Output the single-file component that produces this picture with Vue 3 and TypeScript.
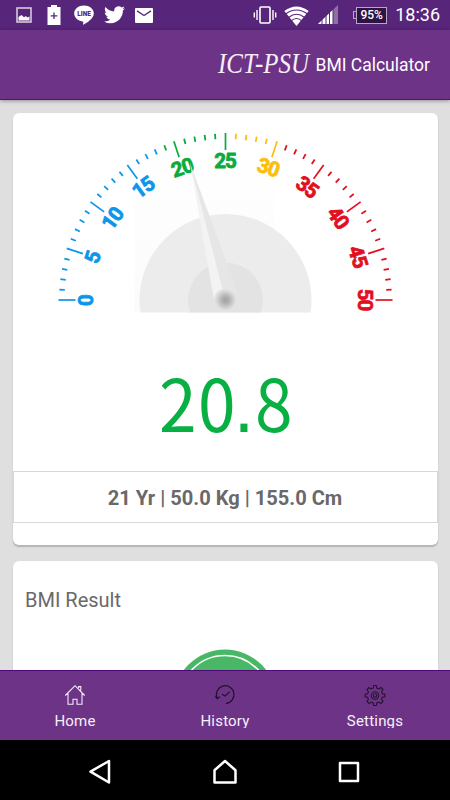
<script setup lang="ts">
interface Tick {
  value: number
  major: boolean
  color: string
  angle: number
}

const bmi = 20.8
const [whole, fraction] = bmi.toFixed(1).split('.')
const profile = '21 Yr | 50.0 Kg | 155.0 Cm'

function zoneColor(value: number): string {
  if (value < 18.5) return '#0a97ea'
  if (value <= 25) return '#08ab3c'
  if (value <= 30) return '#fdbe0b'
  return '#e2101f'
}

const ticks: Tick[] = Array.from({ length: 51 }, (_, value) => ({
  value,
  major: value % 5 === 0,
  color: zoneColor(value),
  angle: (value - 25) * 3.6,
}))
const labels = ticks.filter((t) => t.major)
</script>

<template>
  <div class="screen">
    <div class="status">
      <div class="status-group left">
        <svg class="picture" width="16" height="16" viewBox="0 0 16 16">
          <rect x="1" y="1" width="14" height="14" fill="none" stroke="#d5c9dd" stroke-width="1.6" />
          <path d="M2.5 13.500V10l3-2 2.500 2.200 2-1.200 1.200 1.500 2.300-1v4z" fill="#fff" />
        </svg>
        <svg class="battery-plus" width="14" height="20" viewBox="0 0 14 20">
          <path d="M4 0h6v2h3.500v18H.5V2H4z" fill="#fff" />
          <path d="M7 7.500v6.500M3.700 10.800h6.600" stroke="#57257a" stroke-width="1.300" />
        </svg>
        <svg class="line-app" width="20" height="20" viewBox="0 0 20 20">
          <path d="M10 .5C4.500.5.200 4 .200 8.500c0 4 3.600 7.200 8.300 7.900 1 .2.800 1 .6 2.800 0 .5.300.6.700.4C14 17 19.800 13.200 19.800 8.500 19.800 4 15.500.5 10 .5z" fill="#fff" />
          <text x="10" y="11" text-anchor="middle" textLength="13.500" lengthAdjust="spacingAndGlyphs" class="line-word">LINE</text>
        </svg>
        <svg class="bird" width="21" height="18" viewBox="0 2.500 24 19.500">
          <path fill="#fff" d="M23.950 4.570a10 10 0 0 1-2.820.770 4.960 4.960 0 0 0 2.160-2.720c-.950.550-2 .950-3.130 1.180a4.920 4.920 0 0 0-8.380 4.480C7.690 8.090 4.070 6.130 1.640 3.160a4.820 4.820 0 0 0-.67 2.480c0 1.710.870 3.210 2.190 4.100a4.900 4.900 0 0 1-2.230-.620v.060a4.920 4.920 0 0 0 3.950 4.830 5 5 0 0 1-2.210.080 4.940 4.940 0 0 0 4.600 3.420A9.870 9.870 0 0 1 0 19.540a14 14 0 0 0 7.550 2.210c9.050 0 14-7.500 14-13.980 0-.210 0-.420-.020-.630a9.940 9.940 0 0 0 2.420-2.570z" />
        </svg>
        <svg class="mail" width="18" height="15" viewBox="0 0 18 15">
          <rect width="18" height="15" rx="1" fill="#fff" />
          <path d="M2 2.800l7 4.700 7-4.700" fill="none" stroke="#57257a" stroke-width="1.400" />
        </svg>
      </div>
      <div class="status-group right">
        <svg class="vibrate" width="24" height="18" viewBox="0 0 24 18">
          <rect x="7" y="1" width="10" height="16" rx="1" fill="none" stroke="#fff" stroke-width="1.600" />
          <path d="M4 4v10M1.300 6.500v5M20 4v10M22.700 6.500v5" stroke="#fff" stroke-width="1.400" />
        </svg>
        <svg class="wifi" width="25" height="20" viewBox="0 0 25 20">
          <path d="M.3 5Q12.500-4 24.700 5L12.500 20z" fill="#fff" />
          <path d="M1.500 8Q12.500 0 23.500 8M4.500 11.500Q12.500 5 20.500 11.500M7 15Q12.500 10 18 15" fill="none" stroke="#57257a" stroke-width="1.100" />
        </svg>
        <svg class="signal" width="20" height="20" viewBox="0 0 20 20">
          <path d="M20 0v19H0z" fill="#8f70a5" />
          <path d="M15 4.750V19H0z" fill="#fff" />
          <path d="M4 13v7M8 8v12M11.500 6v14M15 3v17" stroke="#57257a" stroke-width="1" />
        </svg>
        <div class="battery"><span>95%</span></div>
        <span class="clock">18:36</span>
      </div>
    </div>

    <header class="toolbar">
      <svg class="brand" width="100" height="44" viewBox="0 0 100 44">
        <text x="4" y="30" textLength="91" lengthAdjust="spacingAndGlyphs">ICT-PSU</text>
      </svg>
      <span class="title">BMI Calculator</span>
    </header>

    <main class="content">
      <section class="card summary">
        <svg class="gauge" width="425" height="240" viewBox="12.500 113 425 240">
          <defs>
            <linearGradient id="haze" x1="0" y1="1" x2="0" y2="0">
              <stop offset="0" stop-color="#fbfbfb" />
              <stop offset="1" stop-color="#fff" />
            </linearGradient>
            <radialGradient id="hub">
              <stop offset="0" stop-color="#a2a2a2" />
              <stop offset=".3" stop-color="#b0b0b0" />
              <stop offset=".85" stop-color="#dedede" />
              <stop offset="1" stop-color="#e6e6e6" />
            </radialGradient>
            <clipPath id="dial"><rect x="130" y="200" width="190" height="112.500" /></clipPath>
          </defs>
          <rect x="134" y="140" width="140" height="172" fill="url(#haze)" />
          <g clip-path="url(#dial)">
            <circle cx="225" cy="300" r="86" fill="#ececec" />
            <circle cx="225" cy="300" r="37.500" fill="#e3e3e3" />
          </g>
          <line
            v-for="t in ticks"
            :key="t.value"
            x1="225"
            x2="225"
            :y1="t.major ? 133 : 133.600"
            :y2="t.major ? 150 : 139"
            :stroke="t.color"
            :stroke-width="t.major ? 1.700 : 1.800"
            :transform="`rotate(${t.angle} 225 300)`"
          />
          <text
            v-for="t in labels"
            :key="'l' + t.value"
            class="mark"
            x="224.500"
            y="167.700"
            text-anchor="middle"
            :fill="t.color"
            :stroke="t.color"
            :transform="`rotate(${t.angle} 225 300)`"
          >{{ t.value }}</text>
          <path d="M189.500 163L213 297l12 3z" fill="#f3f3f3" />
          <path d="M189.500 163L225 300l12-8z" fill="#e6e6e6" />
          <circle cx="225" cy="300" r="11.500" fill="url(#hub)" />
        </svg>
        <svg class="score" width="425" height="118" viewBox="12.500 353 425 118">
          <text transform="translate(158.500 431.500) scale(.94 1)" x="0 41.500">{{ whole }}<tspan class="point" x="79.500">.</tspan><tspan x="102">{{ fraction }}</tspan></text>
        </svg>
        <div class="profile">{{ profile }}</div>
      </section>

      <section class="card result">
        <h2>BMI Result</h2>
        <svg class="badge" width="104" height="104" viewBox="0 0 104 104">
          <circle cx="52" cy="52" r="51.500" fill="#48b866" />
          <circle cx="52" cy="52" r="45.500" fill="none" stroke="#fff" stroke-width="1.500" />
        </svg>
      </section>
    </main>

    <nav class="tabs">
      <div class="tab">
        <svg width="22" height="22" viewBox="0 0 22 22" fill="none" stroke="#f4ecf6" stroke-width="1.100">
          <path d="M1.300 11.500L11 1.700l9.700 9.800M4 9.500v10.800h5v-5h4v5h5V9.500M14.600 4V2.600h2.200v4" />
        </svg>
        <span>Home</span>
      </div>
      <div class="tab">
        <svg width="22" height="22" viewBox="0 0 22 22" fill="none" stroke="#1f1228" stroke-width="1.200">
          <path d="M3.200 14.200A8.800 8.800 0 1 1 12 19.300M1.300 12.300l1.900 2.400 2.700-1.900M8 10.300l3.200 1.800 4.500-4.500" />
        </svg>
        <span>History</span>
      </div>
      <div class="tab">
        <svg width="22" height="22" viewBox="0 0 22 22" fill="none" stroke="#25132f" stroke-width="1.100">
          <path d="M9.700 1.500h2.600l.5 2.600 2 .8 2.200-1.400 2 2-1.400 2.200.8 2 2.500.5v2.600l-2.500.5-.8 2 1.400 2.200-2 2-2.200-1.400-2 .8-.5 2.600H9.700l-.5-2.600-2-.8L5 19.500l-2-2 1.400-2.200-.8-2-2.500-.5v-2.600l2.500-.5.8-2L3 5.500l2-2 2.200 1.400 2-.8z" />
          <circle cx="11" cy="11.500" r="3.700" />
          <circle cx="11" cy="11.500" r="1.700" />
        </svg>
        <span>Settings</span>
      </div>
    </nav>

    <div class="system">
      <svg width="26" height="28" viewBox="0 0 26 28"><path d="M22 3v21.500L3.500 13.700z" /></svg>
      <svg width="28" height="28" viewBox="0 0 28 28"><path d="M3.500 12.300L14 3l10.500 9.300v12.200h-21z" /></svg>
      <svg width="24" height="28" viewBox="0 0 24 28"><path d="M3 5h18v18H3z" /></svg>
    </div>
  </div>
</template>

<style>
body {
  margin: 0;
}
</style>

<style scoped>
.screen {
  width: 450px;
  height: 800px;
  display: flex;
  flex-direction: column;
  overflow: hidden;
  background: #dfdfdf;
  font-family: Roboto, 'Liberation Sans', sans-serif;
}
svg {
  display: block;
  flex: none;
}
.status {
  height: 30px;
  flex: none;
  box-sizing: border-box;
  display: flex;
  align-items: center;
  justify-content: space-between;
  padding: 0 10px 0 16px;
  background: #57257a;
  color: #fff;
}
.status-group {
  display: flex;
  align-items: center;
}
.battery-plus {
  margin-left: 15px;
}
.line-app {
  margin-left: 13px;
}
.bird {
  margin-left: 10px;
}
.mail {
  margin-left: 10px;
}
.line-word {
  font: 900 6.500px Roboto, sans-serif;
  fill: #57257a;
}
.vibrate {
  margin-right: -1px;
}
.wifi {
  margin-left: 8px;
  margin-top: 1px;
}
.signal {
  margin-left: 9px;
}
.battery {
  position: relative;
  width: 31px;
  height: 17px;
  box-sizing: border-box;
  margin-left: 18px;
  border: 1.500px solid #b9a8c5;
  background: #2f1442;
  display: flex;
  align-items: center;
  justify-content: center;
  font-size: 12px;
  font-weight: 500;
}
.battery::before {
  content: '';
  position: absolute;
  left: -4px;
  top: 3px;
  width: 2px;
  height: 6px;
  border: 1px solid #b9a8c5;
  border-right: 0;
}
.clock {
  margin-left: 8px;
  font-size: 18px;
  line-height: 30px;
}
.toolbar {
  position: relative;
  z-index: 1;
  height: 70px;
  flex: none;
  box-sizing: border-box;
  display: flex;
  align-items: center;
  justify-content: flex-end;
  padding-right: 20px;
  background: #6d3387;
  border-bottom: 1px solid #56107c;
  box-shadow: 0 1px 4px rgba(0, 0, 0, 0.35);
  color: #fff;
}
.brand {
  margin-right: 2px;
}
.brand text {
  font: italic 400 29px 'Liberation Serif', serif;
  fill: #f6eff8;
}
.title {
  font-size: 17.500px;
  line-height: 24px;
}
.content {
  flex: 1;
  min-height: 0;
  overflow: hidden;
  padding: 13px 12.500px 0;
}
.card {
  background: #fff;
  border-radius: 6px;
  box-shadow: 0 1.500px 1.500px rgba(0, 0, 0, 0.2);
}
.summary {
  height: 432px;
}
.gauge {
  width: 100%;
}
.score {
  width: 100%;
}
.mark {
  font: 700 20.500px Roboto, sans-serif;
  letter-spacing: -1px;
  stroke-width: 0.800px;
}
.score text {
  font: 400 72px 'Noto Sans CJK SC', sans-serif;
  fill: #08af43;
}
.score .point {
  font-family: 'Liberation Sans', sans-serif;
  font-size: 78px;
}
.profile {
  height: 52px;
  box-sizing: border-box;
  border: 1px solid #d8d8d8;
  display: flex;
  align-items: center;
  justify-content: center;
  padding-top: 1px;
  color: #696969;
  font-size: 20.100px;
  font-weight: 700;
}
.result {
  height: 250px;
  margin-top: 16px;
  overflow: hidden;
}
.result h2 {
  margin: 0;
  padding: 27px 12.500px 0;
  font-size: 20px;
  line-height: 24px;
  font-weight: 400;
  color: #696969;
}
.badge {
  margin: 37px auto 0;
}
.tabs {
  height: 70px;
  flex: none;
  box-sizing: border-box;
  display: grid;
  grid-template-columns: repeat(3, 1fr);
  background: #6d3387;
  border-top: 1px solid #4e0878;
}
.tab {
  display: flex;
  flex-direction: column;
  align-items: center;
  padding-top: 13px;
  color: #f6eff8;
}
.tab span {
  margin-top: 6px;
  height: 16px;
  overflow: hidden;
  font-size: 15px;
  line-height: 18px;
  letter-spacing: 0.200px;
}
.system {
  height: 60px;
  flex: none;
  display: flex;
  justify-content: center;
  align-items: center;
  gap: 98px;
  padding: 3px 2px 0 0;
  box-sizing: border-box;
  background: #000;
}
.system path {
  fill: none;
  stroke: #fff;
  stroke-width: 2.500px;
  stroke-linejoin: round;
}
</style>
